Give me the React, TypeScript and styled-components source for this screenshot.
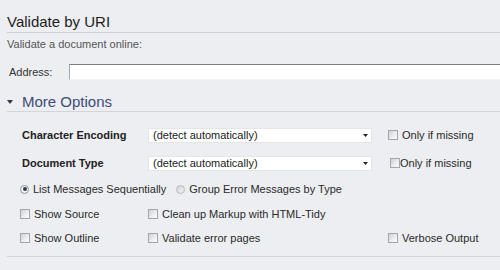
import React from 'react';
import styled, { createGlobalStyle } from 'styled-components';

const GlobalStyle = createGlobalStyle`
  html, body {
    margin: 0;
    padding: 0;
    background: #eceef1;
    overflow: hidden;
  }
  body {
    font-family: "Liberation Sans", Arial, sans-serif;
    color: #333;
  }
`;

const Page = styled.div`
  width: 500px;
  height: 270px;
  padding-left: 7px;
  box-sizing: border-box;
  overflow: hidden;
  background: #eceef1;
`;

const Title = styled.h2`
  margin: 13px 0 0;
  padding-bottom: 1px;
  font-size: 15px;
  line-height: 18px;
  font-weight: normal;
  color: #1e1e1e;
  border-bottom: 1px solid #cfd1d4;
`;

const Intro = styled.p`
  margin: 4px 0 0;
  font-size: 11px;
  line-height: 14px;
  color: #555;
`;

const AddressRow = styled.div`
  display: flex;
  align-items: center;
  height: 16px;
  margin-top: 13px;
  padding-left: 2px;
`;

const AddressLabel = styled.label`
  flex: 0 0 60px;
  font-size: 11px;
  color: #333;
`;

const AddressInput = styled.input`
  flex: 0 0 460px;
  height: 16px;
  box-sizing: border-box;
  margin: 0;
  padding: 0 3px;
  background: #fff;
  border: 1px solid;
  border-color: #7d7d7d #e2e2e2 #f4f4f4 #a9a9a9;
  outline: none;
`;

const SectionHeader = styled.h3`
  display: flex;
  align-items: center;
  gap: 9px;
  margin: 13px 0 0;
  font-size: 15px;
  line-height: 18px;
  font-weight: normal;
  color: #3d4c78;
  border-bottom: 1px solid #d3d5d8;
`;

const Options = styled.div`
  padding: 9px 0 6px 13px;
  border-bottom: 1px solid #d3d5d8;
`;

const Row = styled.div<{ $h: number }>`
  display: grid;
  grid-template-columns: 128px 240px 1fr;
  align-items: center;
  height: ${({ $h }) => $h}px;
  font-size: 11px;
  color: #2a2a2a;
`;

const FlowRow = styled.div<{ $h: number }>`
  display: flex;
  align-items: center;
  gap: 10px;
  height: ${({ $h }) => $h}px;
  font-size: 11px;
  color: #2a2a2a;
`;

const FieldLabel = styled.span`
  padding-left: 2px;
  font-weight: bold;
  color: #222;
`;

const Select = styled.div`
  display: flex;
  align-items: center;
  justify-content: space-between;
  width: 224px;
  height: 15px;
  box-sizing: border-box;
  padding: 0 3px 0 4px;
  background: #fff;
  border: 1px solid #e4e5e7;
  color: #222;
  font-size: 11px;
`;

const Choice = styled.label<{ $tight?: boolean }>`
  display: inline-flex;
  align-items: center;
  gap: ${({ $tight }) => ($tight ? 0 : 4)}px;
  margin-left: ${({ $tight }) => ($tight ? 2 : 0)}px;
  white-space: nowrap;
`;

const Box = styled.span`
  display: inline-block;
  width: 10px;
  height: 10px;
  box-sizing: border-box;
  border: 1px solid #a4a6aa;
  background: linear-gradient(135deg, #cfd1d5 0%, #eceef0 60%, #fafafa 100%);
`;

const Radio = styled.span<{ $on?: boolean }>`
  display: inline-flex;
  align-items: center;
  justify-content: center;
  width: 9px;
  height: 9px;
  box-sizing: border-box;
  border-radius: 50%;
  border: 1px solid ${({ $on }) => ($on ? '#8f9399' : '#b5b8bd')};
  background: ${({ $on }) => ($on ? '#f4f5f7' : 'linear-gradient(135deg, #d2d4d8, #f3f4f6)')};
  &::after {
    content: '';
    display: ${({ $on }) => ($on ? 'block' : 'none')};
    width: 4px;
    height: 4px;
    border-radius: 50%;
    background: #2c3a5e;
  }
`;

const Check = ({ children, tight }: { children: React.ReactNode; tight?: boolean }) => (
  <Choice $tight={tight}>
    <Box />
    {children}
  </Choice>
);

const Arrow = () => (
  <svg width="5" height="3" viewBox="0 0 5 3">
    <path d="M0 0h5L2.5 3z" fill="#222" />
  </svg>
);

const Caret = () => (
  <svg width="6" height="4" viewBox="0 0 6 4">
    <path d="M0 0h6L3 4z" fill="#2f3850" />
  </svg>
);

export default function App() {
  return (
    <Page>
      <GlobalStyle />
      <Title>Validate by URI</Title>
      <Intro>Validate a document online:</Intro>
      <AddressRow>
        <AddressLabel htmlFor="uri">Address:</AddressLabel>
        <AddressInput id="uri" type="text" />
      </AddressRow>
      <SectionHeader>
        <Caret />
        More Options
      </SectionHeader>
      <Options>
        <Row $h={28}>
          <FieldLabel>Character Encoding</FieldLabel>
          <Select>
            (detect automatically)
            <Arrow />
          </Select>
          <Check>Only if missing</Check>
        </Row>
        <Row $h={28}>
          <FieldLabel>Document Type</FieldLabel>
          <Select>
            (detect automatically)
            <Arrow />
          </Select>
          <Check tight>Only if missing</Check>
        </Row>
        <FlowRow $h={24}>
          <Choice>
            <Radio $on />
            List Messages Sequentially
          </Choice>
          <Choice>
            <Radio />
            Group Error Messages by Type
          </Choice>
        </FlowRow>
        <Row $h={25}>
          <Check>Show Source</Check>
          <Check>Clean up Markup with HTML-Tidy</Check>
        </Row>
        <Row $h={24}>
          <Check>Show Outline</Check>
          <Check>Validate error pages</Check>
          <Check>Verbose Output</Check>
        </Row>
      </Options>
    </Page>
  );
}
